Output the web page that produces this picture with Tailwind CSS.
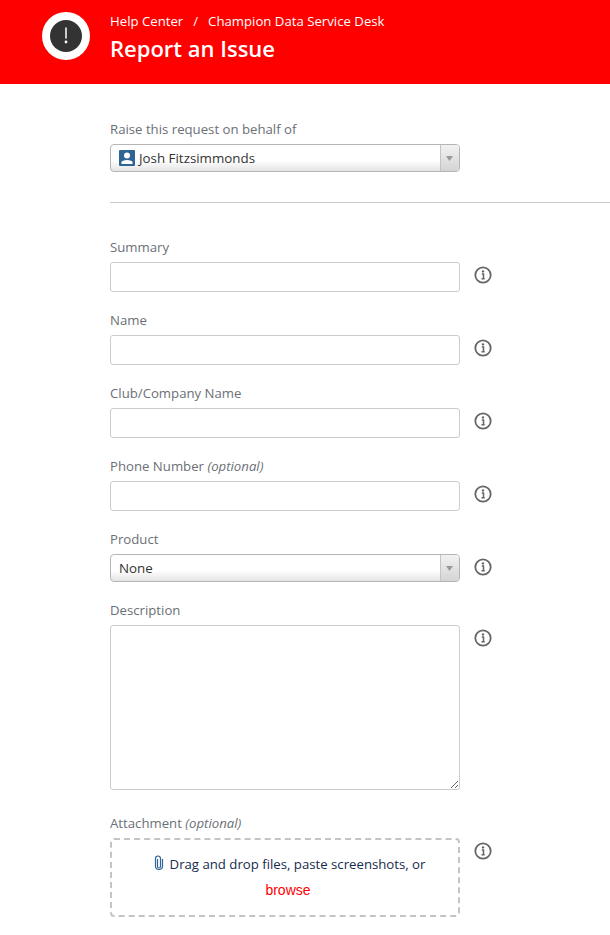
<!DOCTYPE html>
<html lang="en">
<head>
    <meta charset="UTF-8">
    <title>Report an Issue</title>
    <script src="https://cdn.jsdelivr.net/npm/@tailwindcss/browser@4"></script>
</head>
<body class="bg-white font-['Open_Sans',sans-serif] overflow-hidden">

    <!-- Header -->
    <header class="h-[84px] bg-[#ff0000] flex items-start pl-[42px] pt-[12px]">
        <div class="w-[48px] h-[48px] rounded-full bg-white flex items-center justify-center">
            <div class="w-[32px] h-[32px] rounded-full bg-[#333333] flex items-center justify-center">
                <svg width="4" height="18" viewBox="0 0 4 18"><path d="M2 1v10" stroke="#fff" stroke-width="1.500" stroke-linecap="round"/><circle cx="2" cy="15" r="1.400" fill="#fff"/></svg>
            </div>
        </div>
        <div class="ml-[20px] -mt-[1px]">
            <div class="text-[13.2px] leading-[20px] text-white flex">
                <span>Help Center</span>
                <span class="mx-[10px]">/</span>
                <span>Champion Data Service Desk</span>
            </div>
            <h1 class="text-[22px] leading-[30px] mt-[2px] font-semibold text-white">Report an Issue</h1>
        </div>
    </header>

    <main class="pl-[110px] pt-[35px]">
        <!-- On behalf of -->
        <label class="block text-[13.2px] leading-[20px] text-[#6b6f76] mb-[5px]">Raise this request on behalf of</label>
        <div class="w-[350px] h-[28px] border border-[#b5b5b5] rounded-[4px] bg-gradient-to-b from-white from-60% to-[#e4e4e4] flex items-center">
            <svg class="ml-[8px]" width="16" height="16" viewBox="0 0 16 16"><rect width="16" height="16" rx="1" fill="#2f6496"/><circle cx="8" cy="5.500" r="3" fill="#fff"/><path d="M2.500 14v-2c0-1 2.500-2 5.500-2s5.500 1 5.500 2v2z" fill="#fff"/></svg>
            <span class="ml-[4px] flex-1 text-[13.35px] leading-[21px] text-[#333]">Josh Fitzsimmonds</span>
            <div class="w-[19px] h-full border-l border-[#c4c4c4] bg-gradient-to-b from-[#f2f2f2] to-[#d4d4d4] rounded-r-[3px] flex items-center justify-center pr-[1px]">
                <svg width="7" height="5" viewBox="0 0 7 5"><path d="M0 0h7L3.500 5z" fill="#999"/></svg>
            </div>
        </div>

        <hr class="mt-[30px] mb-[34px] border-0 border-t border-[#cccccc]">

        <div class="flex flex-col">
            <!-- Summary -->
            <div class="flex items-start mb-[18px]">
                <div class="w-[350px]">
                    <label class="block text-[13.2px] leading-[20px] text-[#6b6f76] mb-[5px]">Summary</label>
                    <input type="text" class="block w-full h-[30px] border border-[#cccccc] rounded-[3px] bg-white">
                </div>
                <svg class="ml-[14px] mt-[29px]" width="18" height="18" viewBox="0 0 18 18"><circle cx="9" cy="9" r="7.700" fill="none" stroke="#666" stroke-width="1.800"/><circle cx="9" cy="5.400" r="1.200" fill="#666"/><path d="M7.800 8h1.700v4.500M7.500 12.800h3.200" fill="none" stroke="#666" stroke-width="1.500"/></svg>
            </div>
            <!-- Name -->
            <div class="flex items-start mb-[18px]">
                <div class="w-[350px]">
                    <label class="block text-[13.2px] leading-[20px] text-[#6b6f76] mb-[5px]">Name</label>
                    <input type="text" class="block w-full h-[30px] border border-[#cccccc] rounded-[3px] bg-white">
                </div>
                <svg class="ml-[14px] mt-[29px]" width="18" height="18" viewBox="0 0 18 18"><circle cx="9" cy="9" r="7.700" fill="none" stroke="#666" stroke-width="1.800"/><circle cx="9" cy="5.400" r="1.200" fill="#666"/><path d="M7.800 8h1.700v4.500M7.500 12.800h3.200" fill="none" stroke="#666" stroke-width="1.500"/></svg>
            </div>
            <!-- Club -->
            <div class="flex items-start mb-[18px]">
                <div class="w-[350px]">
                    <label class="block text-[13.2px] leading-[20px] text-[#6b6f76] mb-[5px]">Club/Company Name</label>
                    <input type="text" class="block w-full h-[30px] border border-[#cccccc] rounded-[3px] bg-white">
                </div>
                <svg class="ml-[14px] mt-[29px]" width="18" height="18" viewBox="0 0 18 18"><circle cx="9" cy="9" r="7.700" fill="none" stroke="#666" stroke-width="1.800"/><circle cx="9" cy="5.400" r="1.200" fill="#666"/><path d="M7.800 8h1.700v4.500M7.500 12.800h3.200" fill="none" stroke="#666" stroke-width="1.500"/></svg>
            </div>
            <!-- Phone -->
            <div class="flex items-start mb-[18px]">
                <div class="w-[350px]">
                    <label class="block text-[13.2px] leading-[20px] text-[#6b6f76] mb-[5px]">Phone Number <em>(optional)</em></label>
                    <input type="text" class="block w-full h-[30px] border border-[#cccccc] rounded-[3px] bg-white">
                </div>
                <svg class="ml-[14px] mt-[29px]" width="18" height="18" viewBox="0 0 18 18"><circle cx="9" cy="9" r="7.700" fill="none" stroke="#666" stroke-width="1.800"/><circle cx="9" cy="5.400" r="1.200" fill="#666"/><path d="M7.800 8h1.700v4.500M7.500 12.800h3.200" fill="none" stroke="#666" stroke-width="1.500"/></svg>
            </div>
            <!-- Product -->
            <div class="flex items-start mb-[18px]">
                <div class="w-[350px]">
                    <label class="block text-[13.2px] leading-[20px] text-[#6b6f76] mb-[5px]">Product</label>
                    <div class="w-full h-[28px] border border-[#b5b5b5] rounded-[4px] bg-gradient-to-b from-white from-60% to-[#e4e4e4] flex items-center">
                        <span class="ml-[8px] flex-1 text-[13.35px] leading-[21px] text-[#333]">None</span>
                        <div class="w-[19px] h-full border-l border-[#c4c4c4] bg-gradient-to-b from-[#f2f2f2] to-[#d4d4d4] rounded-r-[3px] flex items-center justify-center pr-[1px]">
                            <svg width="7" height="5" viewBox="0 0 7 5"><path d="M0 0h7L3.500 5z" fill="#999"/></svg>
                        </div>
                    </div>
                </div>
                <svg class="ml-[14px] mt-[29px]" width="18" height="18" viewBox="0 0 18 18"><circle cx="9" cy="9" r="7.700" fill="none" stroke="#666" stroke-width="1.800"/><circle cx="9" cy="5.400" r="1.200" fill="#666"/><path d="M7.800 8h1.700v4.500M7.500 12.800h3.200" fill="none" stroke="#666" stroke-width="1.500"/></svg>
            </div>
            <!-- Description -->
            <div class="flex items-start mb-[23px]">
                <div class="w-[350px]">
                    <label class="block text-[13.2px] leading-[20px] text-[#6b6f76] mb-[5px]">Description</label>
                    <textarea class="block w-full h-[165px] border border-[#cccccc] rounded-[3px] bg-white"></textarea>
                </div>
                <svg class="ml-[14px] mt-[29px]" width="18" height="18" viewBox="0 0 18 18"><circle cx="9" cy="9" r="7.700" fill="none" stroke="#666" stroke-width="1.800"/><circle cx="9" cy="5.400" r="1.200" fill="#666"/><path d="M7.800 8h1.700v4.500M7.500 12.800h3.200" fill="none" stroke="#666" stroke-width="1.500"/></svg>
            </div>
            <!-- Attachment -->
            <div class="flex items-start">
                <div class="w-[350px]">
                    <label class="block text-[13.2px] leading-[20px] text-[#6b6f76] mb-[5px]">Attachment <em>(optional)</em></label>
                    <div class="h-[79px] border-2 border-dashed border-[#c4c4c4] rounded-[4px] flex flex-col items-center pt-[12px] pl-[6px]">
                        <div class="flex items-start text-[13.2px] leading-[24px] text-[#172b4d] pl-[3px]">
                            <svg class="mt-[3px] mr-[6px]" width="10" height="16" viewBox="0 0 10 16"><path d="M3.500 4v7.500a1.500 1.500 0 0 0 3 0V3.500a2.500 2.500 0 0 0-5 0V11a3.500 3.500 0 0 0 7 0V4" fill="none" stroke="#2f6496" stroke-width="1.200"/></svg>
                            <span>Drag and drop files, paste screenshots, or</span>
                        </div>
                        <a class="mt-[2px] font-['Liberation_Sans',sans-serif] text-[14px] leading-[24px] text-[#ff0000]">browse</a>
                    </div>
                </div>
                <svg class="ml-[14px] mt-[29px]" width="18" height="18" viewBox="0 0 18 18"><circle cx="9" cy="9" r="7.700" fill="none" stroke="#666" stroke-width="1.800"/><circle cx="9" cy="5.400" r="1.200" fill="#666"/><path d="M7.800 8h1.700v4.500M7.500 12.800h3.200" fill="none" stroke="#666" stroke-width="1.500"/></svg>
            </div>
        </div>
    </main>
</body>
</html>
